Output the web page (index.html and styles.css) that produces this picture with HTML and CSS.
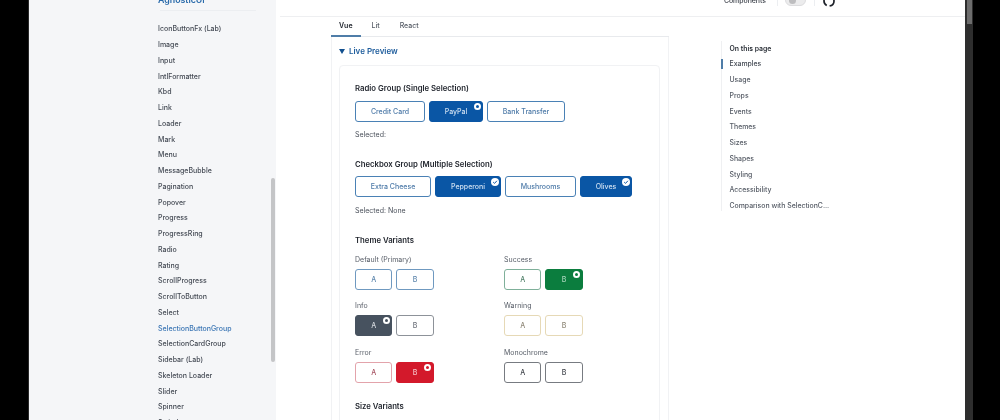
FILE: index.html
```html
<!DOCTYPE html>
<html lang="en">
<head>
<meta charset="utf-8">
<title>SelectionButtonGroup</title>
<link rel="stylesheet" href="styles.css">
</head>
<body>
<div class="shell">
  <div class="edge edge-left"></div>
  <aside class="sidebar">
    <div class="side-scroll">
      <div class="brand"><span>AgnosticUI</span></div>
      <div class="side-rule"></div>
      <ul class="side-list">
        <li>IconButtonFx (Lab)</li><li>Image</li><li>Input</li><li>IntlFormatter</li><li>Kbd</li><li>Link</li><li>Loader</li><li>Mark</li><li>Menu</li><li>MessageBubble</li><li>Pagination</li><li>Popover</li><li>Progress</li><li>ProgressRing</li><li>Radio</li><li>Rating</li><li>ScrollProgress</li><li>ScrollToButton</li><li>Select</li><li class="current">SelectionButtonGroup</li><li>SelectionCardGroup</li><li>Sidebar (Lab)</li><li>Skeleton Loader</li><li>Slider</li><li>Spinner</li><li>Switch</li>
      </ul>
    </div>
    <div class="side-track"><div class="side-thumb"></div></div>
  </aside>
  <main class="main">
    <header class="topbar">
      <span class="top-link">Components</span>
      <span class="top-sep"></span>
      <span class="toggle"><span class="knob"></span></span>
      <span class="top-sep"></span>
      <svg class="gh" width="14" height="14" viewBox="0 0 14 14" aria-hidden="true"><circle cx="7" cy="5" r="5" fill="none" stroke="#1d2129" stroke-width="1.7" stroke-dasharray="9 3 9 10" stroke-dashoffset="2"/></svg>
    </header>
    <div class="page">
      <div class="content">
        <nav class="tabs">
          <span class="tab active">Vue</span><span class="tab">Lit</span><span class="tab">React</span>
        </nav>
        <section class="panel">
          <div class="summary"><span class="tri"></span>Live Preview</div>
          <div class="demo">
            <h3 class="h-radio">Radio Group (Single Selection)</h3>
            <div class="group">
              <button class="opt w-credit">Credit Card</button>
              <button class="opt on w-paypal">PayPal<i class="dot"></i></button>
              <button class="opt w-bank">Bank Transfer</button>
            </div>
            <p class="sel">Selected:</p>
            <h3 class="h-check">Checkbox Group (Multiple Selection)</h3>
            <div class="group group-check">
              <button class="opt w-cheese">Extra Cheese</button>
              <button class="opt on w-pep">Pepperoni<svg class="check" viewBox="0 0 8 8" aria-hidden="true"><circle cx="4" cy="4" r="4" fill="#fff"/><path d="M2.2 4.1 3.5 5.4 5.9 2.8" fill="none" stroke="#0a56a5" stroke-width="1"/></svg></button>
              <button class="opt w-mush">Mushrooms</button>
              <button class="opt on w-olive">Olives<svg class="check" viewBox="0 0 8 8" aria-hidden="true"><circle cx="4" cy="4" r="4" fill="#fff"/><path d="M2.2 4.1 3.5 5.4 5.9 2.8" fill="none" stroke="#0a56a5" stroke-width="1"/></svg></button>
            </div>
            <p class="sel sel-check">Selected: None</p>
            <h3 class="h-theme">Theme Variants</h3>
            <div class="themes">
              <div class="theme t-primary"><div class="t-label">Default (Primary)</div><div class="group"><button class="opt w-ab">A</button><button class="opt w-ab">B</button></div></div>
              <div class="theme t-success"><div class="t-label">Success</div><div class="group"><button class="opt w-ab">A</button><button class="opt on w-ab">B<i class="dot"></i></button></div></div>
              <div class="theme t-info"><div class="t-label">Info</div><div class="group"><button class="opt on w-ab">A<i class="dot"></i></button><button class="opt w-ab">B</button></div></div>
              <div class="theme t-warning"><div class="t-label">Warning</div><div class="group"><button class="opt w-ab">A</button><button class="opt w-ab">B</button></div></div>
              <div class="theme t-error"><div class="t-label">Error</div><div class="group"><button class="opt w-ab">A</button><button class="opt on w-ab">B<i class="dot"></i></button></div></div>
              <div class="theme t-mono"><div class="t-label">Monochrome</div><div class="group"><button class="opt w-ab">A</button><button class="opt w-ab">B</button></div></div>
            </div>
            <h3 class="h-size">Size Variants</h3>
          </div>
        </section>
      </div>
      <nav class="toc">
        <div class="toc-title">On this page</div>
        <a class="toc-item active">Examples</a>
        <a class="toc-item">Usage</a>
        <a class="toc-item">Props</a>
        <a class="toc-item">Events</a>
        <a class="toc-item">Themes</a>
        <a class="toc-item">Sizes</a>
        <a class="toc-item">Shapes</a>
        <a class="toc-item">Styling</a>
        <a class="toc-item">Accessibility</a>
        <a class="toc-item">Comparison with SelectionC...</a>
      </nav>
    </div>
  </main>
  <div class="page-track"><div class="page-thumb"></div></div>
  <div class="edge edge-right"></div>
</div>
</body>
</html>
```
FILE: styles.css
```css
* { box-sizing: border-box; }
html, body { margin: 0; height: 100%; overflow: hidden; background: #000; }
body { font-family: Inter, "Liberation Sans", sans-serif; color: #2f3540; }
.shell { display: flex; width: 1000px; height: 420px; overflow: hidden; filter: blur(0.35px); }
.edge { background: #000; flex: none; }
.edge-left { width: 29px; border-right: 1px solid #2a2a2a; }
.edge-right { width: 27px; }

.sidebar { width: 247px; flex: none; display: flex; justify-content: flex-end; background: #f5f6f8; }
.side-scroll { width: 112px; flex: none; height: 420px; overflow: hidden; }
.brand { height: 4px; color: #2a6bab; font-size: 8.8px; font-weight: 600; line-height: 10px; }
.brand span { display: block; margin-top: -5px; }
.side-rule { margin: 11px 0 0 2px; width: 96px; border-top: 1px solid #eceef1; }
.side-list { list-style: none; margin: 0; padding: 10.4px 0 0; }
.side-list li { height: 15.75px; line-height: 15.75px; font-size: 7px; font-weight: 500; color: #444a54; white-space: nowrap; }
.side-list li.current { color: #3a75b4; }
.side-track { width: 6px; flex: none; padding: 178px 1.5px 0 0.5px; }
.side-thumb { height: 184px; background: #c4c5c7; border-radius: 2px; }

.main { width: 689px; flex: none; background: #fff; display: flex; flex-direction: column; }
.topbar { height: 17px; flex: none; margin-left: 4px; border-bottom: 1px solid #eeeff1; display: flex; align-items: flex-end; justify-content: flex-end; overflow: hidden; padding-right: 132px; padding-bottom: 10px; }
.topbar > * { flex: none; }
.top-link { font-size: 6.9px; line-height: 8px; color: #3a3f48; font-weight: 500; margin-right: 11px; margin-bottom: 1px; }
.top-sep { width: 1px; height: 10px; background: #eceef1; margin-right: 7px; }
.toggle { width: 21px; height: 12px; border-radius: 6px; background: #ececed; border: 1px solid #dcdcde; margin-right: 8px; display: flex; align-items: center; padding-left: 3px; }
.knob { width: 7px; height: 7px; border-radius: 50%; background: #bdbdbf; }
.gh { margin-right: -3px; margin-bottom: -4px; }

.page { display: flex; padding-left: 55px; flex: 1; min-height: 0; }
.content { width: 338px; flex: none; }
.tabs { display: flex; height: 20px; border-bottom: 1px solid #e8eaed; }
.tab { display: flex; align-items: center; height: 17px; font-size: 7px; font-weight: 500; color: #555b65; padding: 0 8px; margin-right: 4px; }
.tab.active { height: 20px; padding-bottom: 2px; font-weight: 600; color: #20252d; border-bottom: 2px solid #4f7da8; margin-right: 3px; }
.panel { border: 1px solid #f1f2f4; border-top: 0; padding: 0 8px 0 7px; height: 400px; }
.summary { height: 28px; display: flex; align-items: center; font-size: 8px; font-weight: 600; color: #1d5c9c; }
.tri { width: 0; height: 0; border-left: 3px solid transparent; border-right: 3px solid transparent; border-top: 5px solid #12508f; margin-right: 4px; }
.demo { border: 1px solid #f1f2f4; border-radius: 4px; padding: 0 15px; height: 400px; }
h3 { margin: 0; font-size: 7.75px; line-height: 10px; font-weight: 600; color: #23272f; }
.h-radio { margin-top: 17px; }
.h-check { margin-top: 20px; }
.h-theme { margin-top: 20px; }
.h-size { margin-top: 18.7px; }
.group { display: flex; gap: 4px; margin-top: 8px; }
.group-check { margin-top: 7px; }
.opt { position: relative; height: 21px; padding: 0; border: 1px solid #4a81b5; border-radius: 3px; background: #fff; color: #4d7aa8; font: 500 7px Inter, "Liberation Sans", sans-serif; flex: none; }
.opt.on { background: #0a56a5; border-color: #0a56a5; color: #cfe0f2; }
.dot { position: absolute; top: 1px; right: 1.5px; width: 7px; height: 7px; border-radius: 50%; background: #0a56a5; border: 2px solid #fff; }
.check { position: absolute; top: 1px; right: 1.5px; width: 8px; height: 8px; }
.w-credit { width: 70px; } .w-paypal { width: 54px; } .w-bank { width: 78px; }
.w-cheese { width: 76px; } .w-pep { width: 66px; } .w-mush { width: 71px; } .w-olive { width: 52px; }
.w-ab { width: 37.4px; }
.sel { margin: 8px 0 0; font-size: 7px; line-height: 9px; color: #4a505a; font-weight: 400; }
.sel-check { margin-top: 9px; }
.themes { display: grid; grid-template-columns: 149px 1fr; row-gap: 11.3px; margin-top: 10px; }
.theme .group { margin-top: 4px; }
.t-label { font-size: 7px; line-height: 10px; color: #575d67; font-weight: 400; }
.t-primary .opt { border-color: #6f99c0; color: #5d86ad; }
.t-success .opt { border-color: #7fb09a; color: #4e7f68; }
.t-success .opt.on { background: #0b7d3e; border-color: #0b7d3e; color: #a9d5bb; }
.t-success .dot { background: #0b7d3e; }
.t-info .opt { border-color: #8d9299; color: #6b7079; }
.t-info .opt.on { background: #47525f; border-color: #47525f; color: #d5d9de; }
.t-info .dot { background: #47525f; }
.t-warning .opt { border-color: #e6d9b6; color: #8f8878; }
.t-error .opt { border-color: #e3a3ab; color: #a5505f; }
.t-error .opt.on { background: #d3192b; border-color: #d3192b; color: #f4c2c7; }
.t-error .dot { background: #d3192b; }
.t-mono .opt { border-color: #777b81; color: #3f434a; }

.toc { width: 136px; flex: none; margin: 23.5px 0 0 52px; border-left: 1px solid #eff0f2; height: 170px; padding-left: 7.5px; }
.toc-title, .toc-item { display: block; height: 15.75px; line-height: 15.75px; font-size: 6.9px; white-space: nowrap; }
.toc-title { font-weight: 600; color: #2b3038; }
.toc-item { font-weight: 500; color: #555b65; }
.toc-item.active { color: #444a54; position: relative; }
.toc-item.active::before { content: ""; position: absolute; left: -8.5px; top: 3px; width: 1.5px; height: 10px; background: #4f7da8; }

.page-track { width: 8px; flex: none; background: #2e2e2e; padding: 0 1px 0 2px; }
.page-thumb { height: 24px; background: #6d6d6d; }
```
